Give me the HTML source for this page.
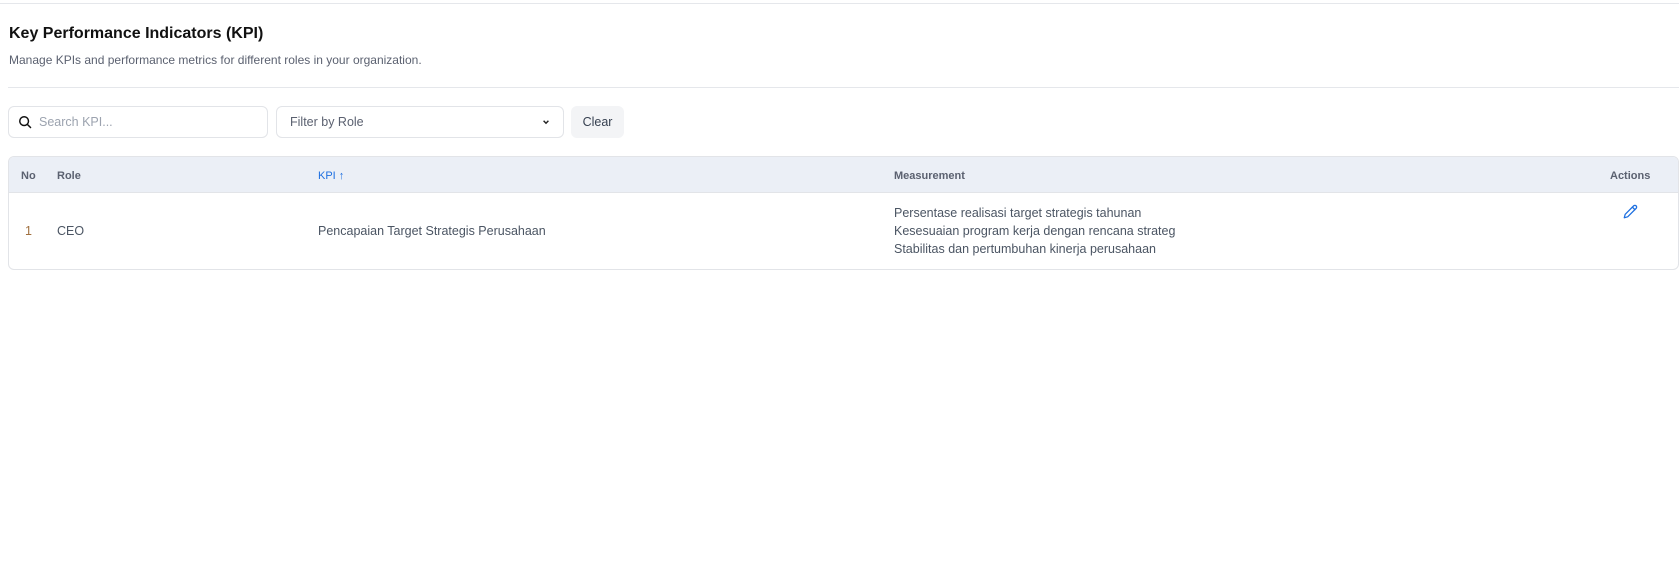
<!DOCTYPE html>
<html><head><meta charset="utf-8"><style>
*{box-sizing:border-box;margin:0;padding:0}
body{width:1679px;height:573px;background:#fff;font-family:"Liberation Sans",sans-serif;position:relative;overflow:hidden;color:#374151}
.abs{position:absolute}
.line{position:absolute;height:1px;background:#e5e7eb}
.box{position:absolute;border:1px solid #e2e4e8;border-radius:6px;background:#fff}
.th{position:absolute;top:170px;font-size:11px;font-weight:bold;color:#5b6170}
.td{position:absolute;font-size:12.5px;color:#4b5563}
</style></head><body>
<div class="line" style="top:3px;left:0;width:1679px"></div>
<div class="abs" style="left:9px;top:25px;font-size:16px;font-weight:bold;color:#111">Key Performance Indicators (KPI)</div>
<div class="abs" style="left:9px;top:53px;font-size:12px;color:#5b6170">Manage KPIs and performance metrics for different roles in your organization.</div>
<div class="line" style="top:87px;left:8px;width:1671px"></div>

<div class="box" style="left:8px;top:106px;width:260px;height:32px"></div>
<svg class="abs" style="left:18px;top:115px" width="14" height="14" viewBox="0 0 24 24" fill="none" stroke="#111" stroke-width="2.5" stroke-linecap="round"><circle cx="10.5" cy="10.5" r="7.5"/><path d="M16 16l5.5 5.5"/></svg>
<div class="abs" style="left:39px;top:115px;font-size:12.5px;color:#9ca3af">Search KPI...</div>

<div class="box" style="left:276px;top:106px;width:288px;height:32px"></div>
<div class="abs" style="left:290px;top:115px;font-size:12.5px;color:#5b6170">Filter by Role</div>
<svg class="abs" style="left:542px;top:118px" width="8" height="8" viewBox="0 0 10 10" fill="none" stroke="#222" stroke-width="1.8"><path d="M2 3.5l3 3 3-3"/></svg>

<div class="abs" style="left:571px;top:106px;width:53px;height:32px;background:#f3f4f6;border-radius:6px;font-size:12.5px;color:#374151;text-align:center;line-height:32px">Clear</div>

<div class="box" style="left:8px;top:156px;width:1671px;height:114px;border-radius:6px;overflow:hidden">
  <div style="height:36px;background:#ebeff6;border-bottom:1px solid #e2e4e8"></div>
</div>
<div class="th" style="left:21px">No</div>
<div class="th" style="left:57px">Role</div>
<div class="th" style="left:318px;color:#1d6fe0;font-weight:normal">KPI ↑</div>
<div class="th" style="left:894px">Measurement</div>
<div class="th" style="left:1610px">Actions</div>

<div class="td" style="left:25px;top:224px;color:#a0703f">1</div>
<div class="td" style="left:57px;top:224px">CEO</div>
<div class="td" style="left:318px;top:224px">Pencapaian Target Strategis Perusahaan</div>
<div class="td" style="left:894px;top:204px;line-height:18px">Persentase realisasi target strategis tahunan<br>Kesesuaian program kerja dengan rencana strateg<br>Stabilitas dan pertumbuhan kinerja perusahaan</div>
<svg class="abs" style="left:1623px;top:204px" width="15" height="15" viewBox="0 0 24 24" fill="none" stroke="#1d6fe0" stroke-width="2" stroke-linecap="round" stroke-linejoin="round"><path d="M17 3a2.8 2.8 0 0 1 4 4L7.5 20.5 2 22l1.5-5.5z"/><path d="M15 5l4 4"/></svg>
</body></html>
